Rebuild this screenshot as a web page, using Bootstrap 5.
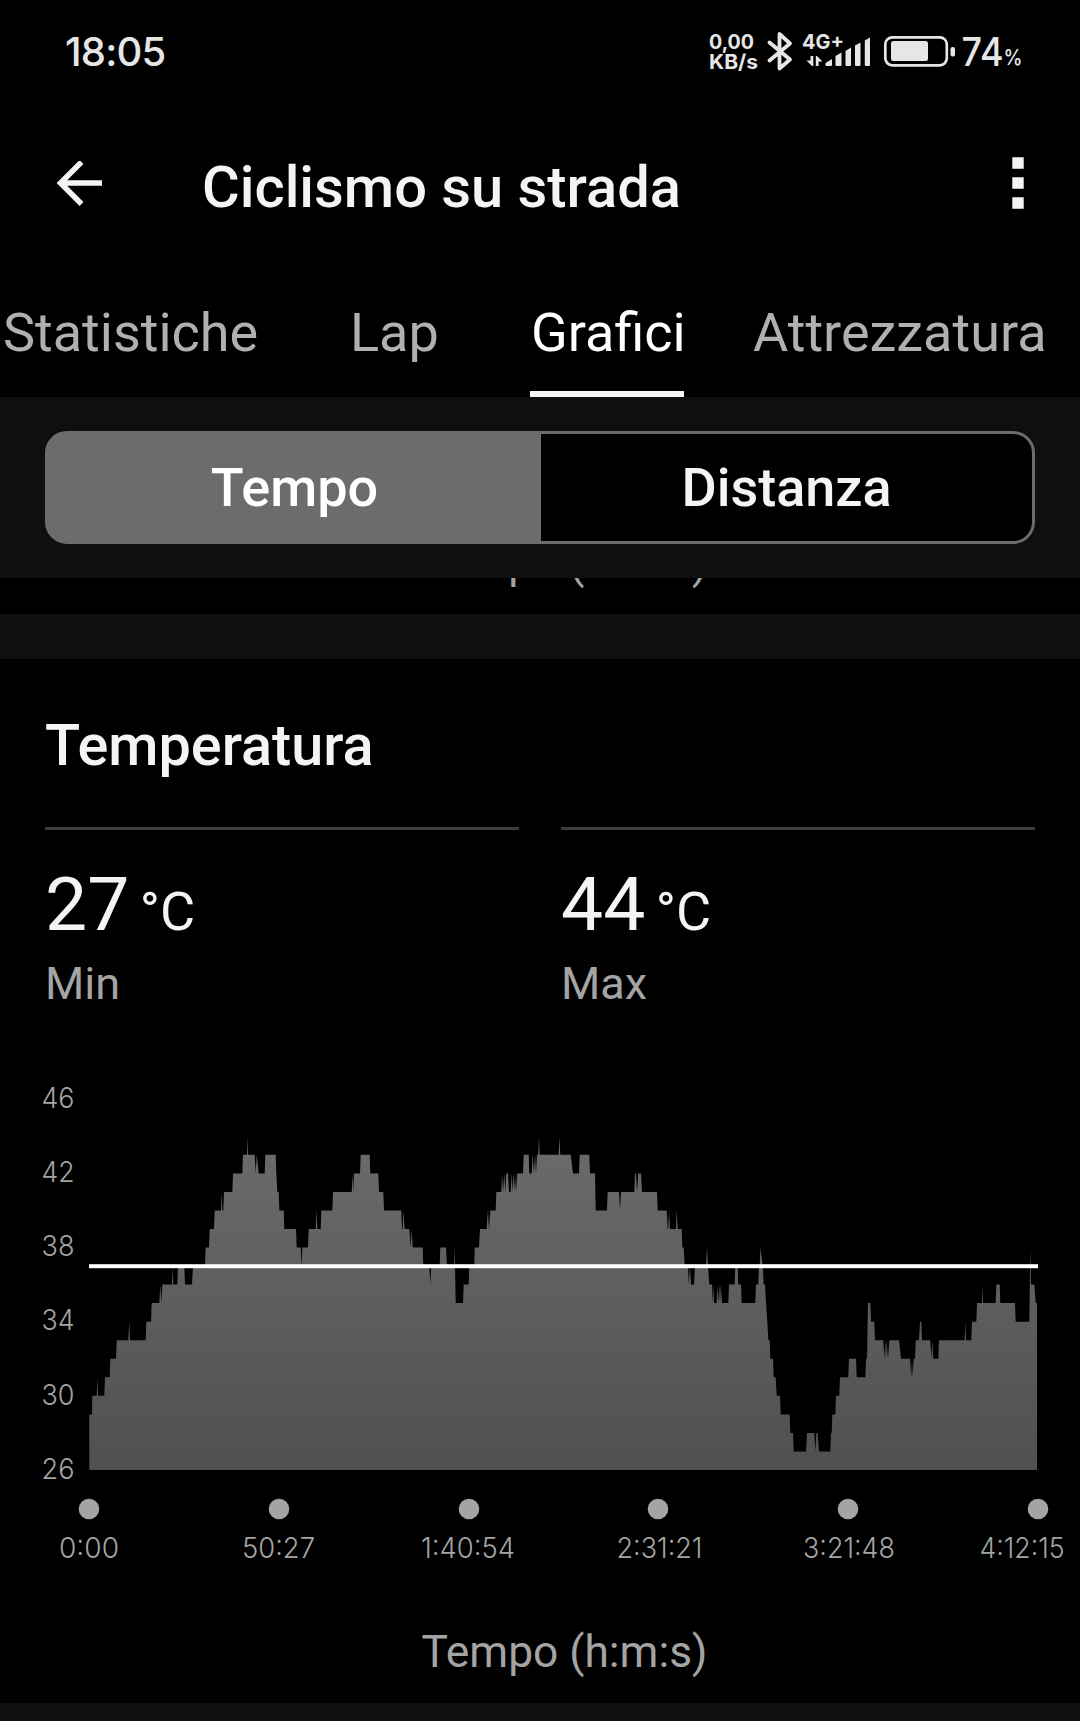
<!DOCTYPE html>
<html lang="it">
<head>
<meta charset="utf-8">
<meta name="viewport" content="width=device-width, initial-scale=1">
<title>Ciclismo su strada</title>
<link rel="stylesheet" href="https://cdn.jsdelivr.net/npm/bootstrap@5.3.0/dist/css/bootstrap.min.css">
<style>
  body { background:#000; color:#f4f4f4; font-family:Roboto,"Noto Sans",sans-serif; width:1080px; height:1721px; overflow:hidden; }
  svg { display:block; }
  .statusbar { height:100px; padding:0 50px 0 66px; }
  .clock { font:500 40px/40px Inter,sans-serif; color:#e6e6e6; margin-top:32px; margin-left:-1px; letter-spacing:-.8px; }
  .appbar { height:172px; padding:0 43px 0 56px; }
  .app-title { font-size:57.8px; line-height:70px; font-weight:500; margin:2px 0 0 97px; }
  .tabs-row { height:125px; font-size:54px; line-height:64px; }
  .tabs-row .nav-link { padding:29px 0 0; height:125px; color:#b0b0b0; white-space:nowrap; border-bottom:6px solid transparent; border-radius:0; }
  .tabs-row .nav-link.active { color:#fff; border-color:#f4f4f4; }
  .t-first { margin-left:3px; width:257px; }
  .t-lap { margin-left:90px; width:88px; }
  .t-graf { margin-left:92px; width:154px; padding-left:1px !important; text-align:center; }
  .t-attr { margin-left:69px; width:300px; }
  .band { background:#0f0f0f; }
  .switch-band { height:181px; padding:34px 45px 0; }
  .switcher { height:113px; border:3px solid #6c6c6c; border-radius:22px; background:linear-gradient(90deg,#6c6c6c 493px,#000 493px); }
  .switcher .btn { font-size:54px; line-height:64px; font-weight:500; border:0; border-radius:0; color:#f4f4f4; padding:0 0 0 1px; background:transparent; }
  .switcher .btn.active { color:#fff; }
  .peek { height:36px; overflow:hidden; }
  .axis-title { font-size:44.3px; line-height:54px; color:#a4a4a4; text-align:center; padding-left:49px; white-space:nowrap; }
  .peek .axis-title { margin-top:-42px; }
  .gap-band { height:45px; }
  .panel { height:1044px; padding:0 45px; }
  .panel-title { font-size:57.6px; line-height:70px; font-weight:500; margin:52px 0 0; }
  .stats { gap:42px; margin-top:46px; }
  .stat { border-top:3px solid #3c3c3c; height:190px; }
  .stat-value { font-size:75px; line-height:88px; margin-top:30px; white-space:nowrap; }
  .stat-unit { font-size:54px; margin-left:10.500px; }
  .stat-label { font-size:45px; line-height:54px; color:#a4a4a4; margin-top:1px; }
  .plot { margin:46px -45px 0; }
  .x-title { margin-bottom:24px; }
</style>
</head>
<body>
<header>
  <div class="statusbar d-flex justify-content-between">
    <div class="clock">18:05</div>
    <svg width="330" height="100" viewBox="700 0 330 100" fill="#e6e6e6" font-family="Inter,sans-serif">
      <g font-size="20" font-weight="700">
        <text x="709" y="49" textLength="45" lengthAdjust="spacingAndGlyphs">0,00</text>
        <text x="709" y="69" textLength="49" lengthAdjust="spacingAndGlyphs">KB/s</text>
        <text x="802" y="49" textLength="42" lengthAdjust="spacingAndGlyphs">4G+</text>
      </g>
      <path d="M769.500 42.500 L790 59.500 L779.500 68.500 V34 L790 43.500 L769.500 60.500" fill="none" stroke="#e6e6e6" stroke-width="3.800" stroke-linejoin="round" stroke-linecap="round"/>
      <path d="M810.500 56H813.300V66H812L806.500 60.500H810.500Z M815.800 66V56H817L822.500 61.500H818.600V66Z"/>
      <path d="M825.500 63L832 59V65Q832 66 831 66H826.500Q825.500 66 825.500 65Z M835.500 56L841.500 52.500V65Q841.500 66 840.500 66H836.500Q835.500 66 835.500 65Z M845.500 51L851 47.500V65Q851 66 850 66H846.500Q845.500 66 845.500 65Z M855 45.500L860.500 42.500V65Q860.500 66 859.500 66H856Q855 66 855 65Z M864.800 40.500L870 37.500V65Q870 66 869 66H865.800Q864.800 66 864.800 65Z"/>
      <rect x="885.300" y="37.300" width="61.500" height="28" rx="7" fill="none" stroke="#e6e6e6" stroke-width="2.700"/>
      <rect x="891" y="41" width="37" height="20" rx="2.500"/>
      <rect x="950.500" y="47" width="4.500" height="9.500" rx="2"/>
      <text x="961.500" y="66" font-size="40" font-weight="500" textLength="42" lengthAdjust="spacingAndGlyphs">74</text>
      <text x="1003.500" y="65" font-size="22" font-weight="500" textLength="19" lengthAdjust="spacingAndGlyphs">%</text>
    </svg>
  </div>
  <div class="appbar d-flex align-items-center">
    <svg width="49" height="50" viewBox="0 0 49 50" fill="none" stroke="#f4f4f4" stroke-width="5.500"><path d="M46 22H5M25.500 1L4.500 22L25.500 43"/></svg>
    <h1 class="app-title">Ciclismo su strada</h1>
    <svg class="ms-auto" width="38" height="58" viewBox="0 0 38 58" fill="#f4f4f4"><path d="M13.300 0.300h11.400v11.400H13.300zM13.300 20.300h11.400v11.400H13.300zM13.300 40.300h11.400v11.400H13.300z"/></svg>
  </div>
  <nav class="nav tabs-row flex-nowrap">
    <a class="nav-link t-first">Statistiche</a>
    <a class="nav-link t-lap">Lap</a>
    <a class="nav-link active t-graf">Grafici</a>
    <a class="nav-link t-attr">Attrezzatura</a>
  </nav>
</header>
<main>
  <div class="band switch-band">
    <div class="switcher d-flex">
      <button class="btn active w-50">Tempo</button>
      <button class="btn w-50">Distanza</button>
    </div>
  </div>
  <div class="peek"><div class="axis-title">Tempo (h:m:s)</div></div>
  <div class="band gap-band"></div>
  <section class="panel d-flex flex-column">
    <h2 class="panel-title">Temperatura</h2>
    <div class="stats d-flex">
      <div class="stat flex-fill w-50">
        <div class="stat-value">27<span class="stat-unit">°C</span></div>
        <div class="stat-label">Min</div>
      </div>
      <div class="stat flex-fill w-50">
        <div class="stat-value">44<span class="stat-unit">°C</span></div>
        <div class="stat-label">Max</div>
      </div>
    </div>
    <div class="plot">
      <svg width="1080" height="510" viewBox="0 1063 1080 510" font-family="Inter,sans-serif" font-size="29" font-weight="350" fill="#a4a4a4">
        <defs><linearGradient id="fade" gradientUnits="userSpaceOnUse" x1="0" y1="1137" x2="0" y2="1470"><stop stop-color="#6b6b6b"/><stop offset="1" stop-color="#505050"/></linearGradient></defs>
        <path id="area" fill="url(#fade)"/>
        <rect x="89" y="1264.200" width="949" height="4" fill="#fff"/>
        <g id="yaxis"></g>
        <g id="xaxis"></g>
      </svg>
    </div>
    <div class="axis-title x-title mt-auto">Tempo (h:m:s)</div>
  </section>
  <div class="band gap-band"></div>
</main>
<script src="https://cdn.jsdelivr.net/npm/bootstrap@5.3.0/dist/js/bootstrap.bundle.min.js"></script>
<script>
  // Samples per stretch of the ride: "from-to:degrees" or "at:degrees", in thirds of a pixel from the origin.
  const stretches = [
    [30, "178-186:29 187-200:30 202:31 204-223:30 225-239:31 241-258:32 260-295:33 298:34 300-347:33 349-363:34 365-388:35 391:36 394:35 397-426:36 428:37 430-442:36 444-463:37 465-486:36 489-525:37 527-537:38 539-552:39 554-573:40 575:41 577-580:40 582-607:41 609-637:42 639-651:43 652.5:44 654-674:43 677:42 680:43 686-704:42 706-737:43 739:42 742-746:41 748-761:40 763-798:39 800-812:38 815:37 817-834:38 836-857:39 860:40 862-872:39 874:40"],
    [300, "64-97:40 99-155:41 158:42 160:41 162-180:42 182-209:43 211-235:42 237-250:41 252-304:40 306-308:39 310:40 314-328:39 332:38 335:39 338-368:38 370-388:37 391:36 394-419:37 421-438:38 441-462:37 464:38 467-489:35 491-506:36 508-523:37 524-537:38 540-560:39 563:40 565:39 567:40 569:39 571-587:40 589-604:41 606:42 609:41 613:42 616:41 619-624:42 627-632:41 635:42 638:41 641:42 645:41 648:42 650:41 652-669:42 671-686:43 688-695:42 698:43 702:42 705:43 708:42 711-715:43 717:44 719-776:43 778:44 781-812:43 819-837:42 839:43"],
    [580, "0-28:43 30-45:42 47-81:40 83-117:41 120:40 123-163:41 165-168:42 171:41 175-183:42 186-231:41 233-260:40 263-265:39 267:40 270-288:39 290:40 293-305:39 307-311:38 314-324:37 326:36 330:37 333-342:36 345-378:37 381:38 384:37 388-396:36 398:35 400:36 402-410:35 412:36 415:35 418:36 420:35 422:36 426-445:35 447-464:36 466-473:37 475-483:36 485-526:35 528-535:36 537-539:37 541.5:38 548:37 551-555:36 558:35 562:34 565-569:33 571-579:32 581-587:31 590-600:30 602-629:29 631-639:28"],
    [760, "101-138:27 141-163:28 166:27 169-173:28 177-211:27 213-215:28 217-226:29 228-238:30 240-265:31 267-288:32 290-316:31 318-321:32 324-331:35 333-343:34 345-370:33 373:32 376:33 378:32 380:33 384:32 388-417:33 423-450:32 454:31 456:32 458:31 461-465:32 467-477:33 480-484:34 486-511:33 514:32 517:33 520-535:32 537-614:33 616:34 618-634:33 636-649:34 651-666:35 668:36 669-707:35 709-719:36 721-765:35 767-808:34 811:38 813-823:36 827-831:35"]
  ];
  const yOf = v => (1470 - (v - 26) * 18.54).toFixed(1);
  let d = "M89.3 1470";
  for (const [origin, list] of stretches)
    for (const item of list.split(" ")) {
      const [span, v] = item.split(":");
      for (const t of span.split("-")) d += `L${(origin + t / 3).toFixed(1)} ${yOf(+v)}`;
    }
  document.getElementById("area").setAttribute("d", d + "V1470Z");

  document.getElementById("yaxis").innerHTML = [46, 42, 38, 34, 30, 26].map((v, i) =>
    `<text x="41.500" y="${1107.5 + i * 74.3}" textLength="33" lengthAdjust="spacingAndGlyphs">${v}</text>`).join("");

  const ticks = [["0:00", 89, 59, 60], ["50:27", 279, 242, 73], ["1:40:54", 469, 421, 94], ["2:31:21", 658, 616.5, 86], ["3:21:48", 848, 803, 92], ["4:12:15", 1038, 979.5, 85]];
  document.getElementById("xaxis").innerHTML = ticks.map(([label, cx, x, w]) =>
    `<circle cx="${cx}" cy="1509" r="10.300"/><text x="${x}" y="1558" textLength="${w}" lengthAdjust="spacingAndGlyphs">${label}</text>`).join("");
</script>
</body>
</html>
